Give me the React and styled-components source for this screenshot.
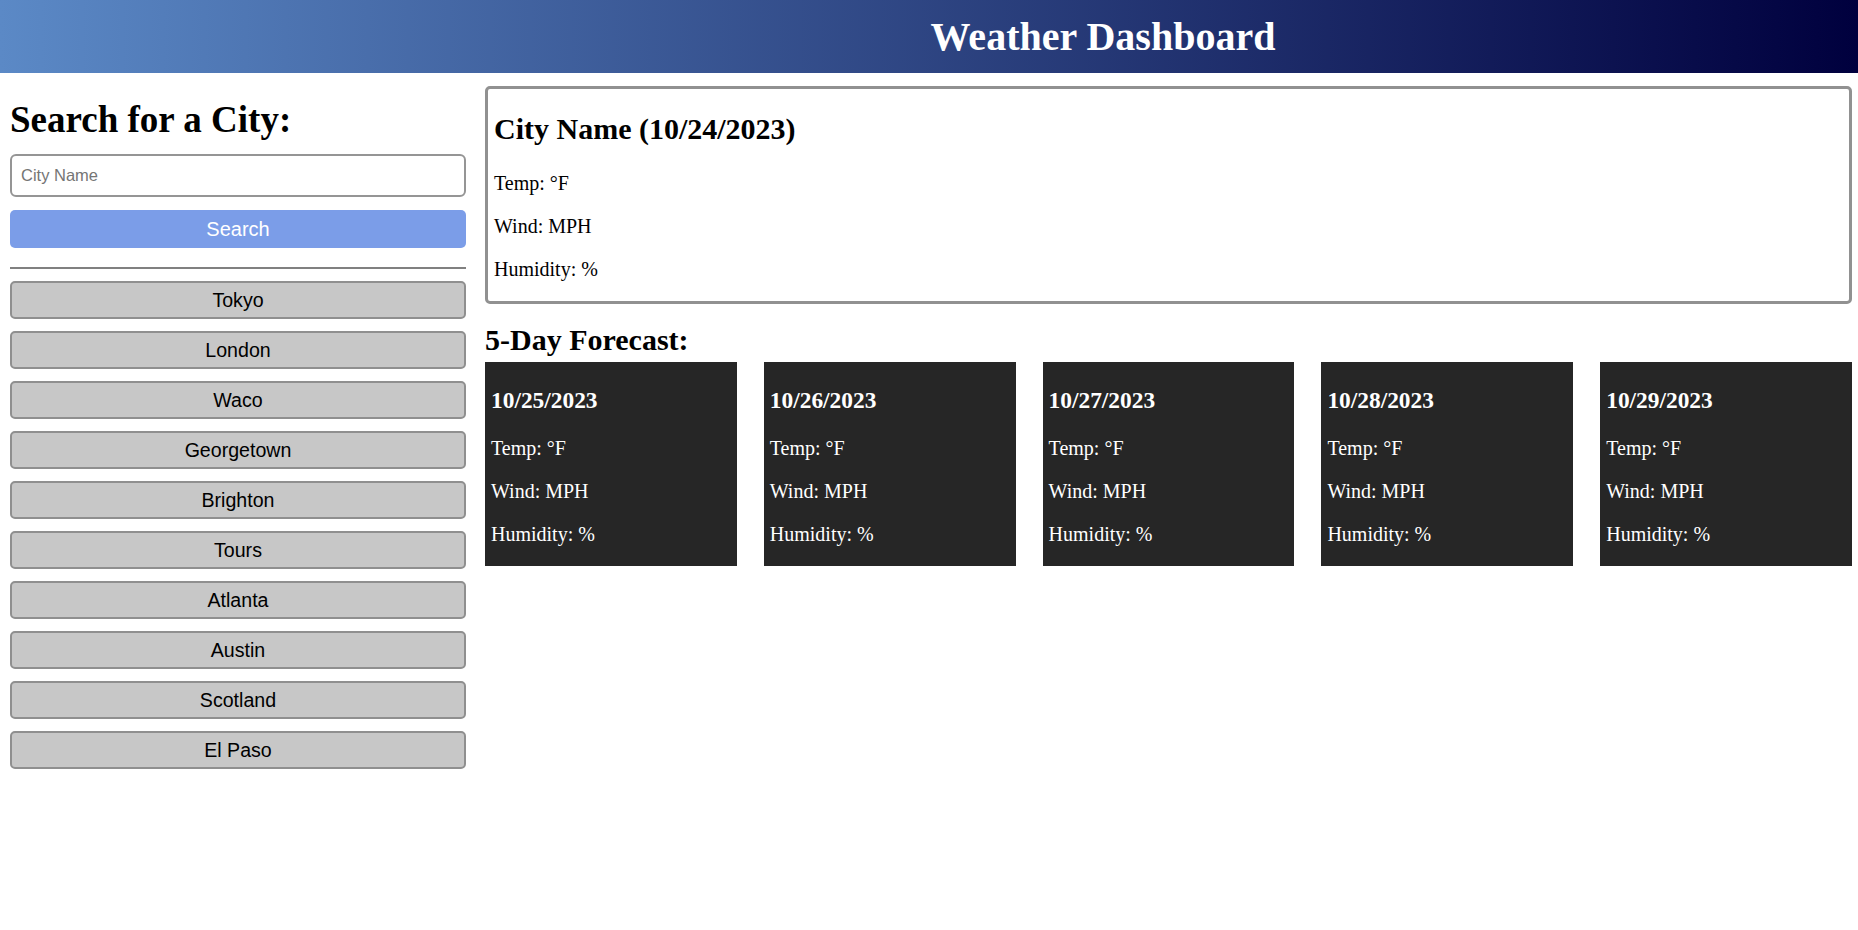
import React from 'react';
import styled, { createGlobalStyle } from 'styled-components';

const cities = ['Tokyo', 'London', 'Waco', 'Georgetown', 'Brighton', 'Tours', 'Atlanta', 'Austin', 'Scotland', 'El Paso'];
const forecast = ['10/25/2023', '10/26/2023', '10/27/2023', '10/28/2023', '10/29/2023'];

const App = () => {
  return (
    <>
      <GlobalStyle />
      <Header>
        <HeaderTitle>Weather Dashboard</HeaderTitle>
      </Header>
      <Layout>
        <Sidebar>
          <SearchTitle>Search for a City:</SearchTitle>
          <CityInput placeholder="City Name" />
          <SearchButton>Search</SearchButton>
          <Divider />
          <History>
            {cities.map((city) => (
              <CityButton key={city}>{city}</CityButton>
            ))}
          </History>
        </Sidebar>
        <Main>
          <Current>
            <CurrentTitle>City Name (10/24/2023)</CurrentTitle>
            <Stat>Temp: °F</Stat>
            <Stat>Wind: MPH</Stat>
            <Stat>Humidity: %</Stat>
          </Current>
          <ForecastTitle>5-Day Forecast:</ForecastTitle>
          <CardRow>
            {forecast.map((day) => (
              <Card key={day}>
                <CardDate>{day}</CardDate>
                <Stat>Temp: °F</Stat>
                <Stat>Wind: MPH</Stat>
                <Stat>Humidity: %</Stat>
              </Card>
            ))}
          </CardRow>
        </Main>
      </Layout>
    </>
  );
};

export default App;

const GlobalStyle = createGlobalStyle`
  body {
    margin: 0;
    background: #fff;
    font-family: "Liberation Serif", "Times New Roman", serif;
    font-size: 20px;
    color: #000;
  }
`;

const Header = styled.header`
  height: 73px;
  display: flex;
  align-items: center;
  justify-content: center;
  padding-left: 348px;
  background: linear-gradient(to right, #5b89c6, #00003e);
`;

const HeaderTitle = styled.h1`
  margin: 0;
  color: #fff;
  font-size: 40px;
  font-weight: bold;
  line-height: 46px;
`;

const Layout = styled.div`
  display: grid;
  grid-template-columns: 456px 1fr;
  gap: 19px;
  padding: 13px 6px 0 10px;
  align-items: start;
`;

const Sidebar = styled.aside`
  display: flex;
  flex-direction: column;
`;

const SearchTitle = styled.h2`
  margin: 12px 0 12px;
  font-size: 37px;
  line-height: 44px;
  font-weight: bold;
`;

const CityInput = styled.input`
  box-sizing: border-box;
  height: 43px;
  width: 100%;
  padding: 0 9px;
  border: 2px solid #959595;
  border-radius: 6px;
  font-family: "Liberation Sans", Arial, sans-serif;
  font-size: 16.5px;
  outline: none;

  &::placeholder {
    color: #757575;
  }
`;

const SearchButton = styled.button`
  margin-top: 13px;
  height: 38px;
  border: none;
  border-radius: 5px;
  background: #7b9de8;
  color: #fff;
  font-family: "Liberation Sans", Arial, sans-serif;
  font-size: 20px;
  cursor: pointer;
`;

const Divider = styled.hr`
  margin: 19px 0 12px;
  border: none;
  height: 2px;
  background: #808080;
`;

const History = styled.div`
  display: flex;
  flex-direction: column;
  gap: 12px;
`;

const CityButton = styled.button`
  height: 38px;
  border: 2px solid #8f8f8f;
  border-radius: 5px;
  background: #c7c7c7;
  color: #000;
  font-family: "Liberation Sans", Arial, sans-serif;
  font-size: 19.6px;
  cursor: pointer;
`;

const Main = styled.main`
  display: flex;
  flex-direction: column;
`;

const Current = styled.section`
  border: 3px solid #919191;
  border-radius: 5px;
  padding: 0 6px;
`;

const CurrentTitle = styled.h2`
  margin: 23px 0 26px;
  font-size: 30px;
  line-height: 34px;
  font-weight: bold;
`;

const Stat = styled.p`
  margin: 20px 0;
  font-size: 20px;
  line-height: 23px;
`;

const ForecastTitle = styled.h2`
  margin: 19px 0 5px;
  font-size: 30px;
  line-height: 34px;
  font-weight: bold;
`;

const CardRow = styled.div`
  display: grid;
  grid-template-columns: repeat(5, 1fr);
  gap: 27px;
`;

const Card = styled.div`
  background: #262626;
  color: #fff;
  padding: 0 6px;
  display: flow-root;
`;

const CardDate = styled.h3`
  margin: 24.5px 0 23px;
  font-size: 23.4px;
  line-height: 27px;
  font-weight: bold;
`;
